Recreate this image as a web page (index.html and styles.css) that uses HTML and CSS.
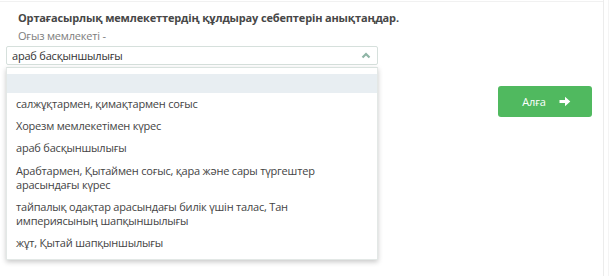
FILE: index.html
```html
<!DOCTYPE html>
<html lang="kk">
<head>
<meta charset="utf-8">
<link rel="stylesheet" href="styles.css">
</head>
<body>
<div class="page">
  <div class="main">
    <div class="question">
      <div class="title">Ортағасырлық мемлекеттердің құлдырау себептерін анықтаңдар.</div>
      <div class="label">Оғыз мемлекеті -</div>
    </div>
    <div class="select-wrap">
      <div class="select">
        <span class="value">араб басқыншылығы</span>
        <svg class="chev" width="10" height="7" viewBox="0 0 10 7"><polyline points="1.5,5.5 5,2 8.5,5.5" fill="none" stroke="#8fb5a6" stroke-width="2.2"/></svg>
      </div>
      <ul class="dropdown">
        <li class="opt empty"></li>
        <li class="opt">салжұқтармен, қимақтармен соғыс</li>
        <li class="opt">Хорезм мемлекетімен күрес</li>
        <li class="opt">араб басқыншылығы</li>
        <li class="opt">Арабтармен, Қытаймен соғыс, қара және сары түргештер арасындағы күрес</li>
        <li class="opt">тайпалық одақтар арасындағы билік үшін талас, Тан империясының шапқыншылығы</li>
        <li class="opt">жұт, Қытай шапқыншылығы</li>
      </ul>
    </div>
    <div class="actions">
      <button class="next">Алға
        <svg width="12" height="11" viewBox="0 0 12 11"><path d="M0.5 4 H6 V0.8 L11.3 5.5 L6 10.2 V7 H0.5 Z" fill="#fff"/></svg>
      </button>
    </div>
  </div>
  <div class="rail"></div>
</div>
</body>
</html>
```
FILE: styles.css
```css
* { box-sizing: border-box; }
html, body { margin: 0; padding: 0; background: #fff; }
body {
  font-family: "Open Sans", "Noto Sans", sans-serif;
  font-size: 11px;
  letter-spacing: -0.2px;
  color: #444;
  width: 609px;
  height: 276px;
  overflow: hidden;
}
.page { display: flex; height: 276px; }
.main {
  width: 603px;
  border-top: 1px solid #f1f1f1;
  margin-top: 1px;
  padding: 0 11px 0 0;
}
.rail {
  width: 6px;
  border-left: 1px solid #ececec;
  border-right: 1px solid #f4f4f4;
}
.question { padding: 7px 0 0 18px; }
.title {
  font-weight: 700;
  color: #474747;
  line-height: 17px;
  letter-spacing: -0.15px;
}
.label {
  color: #7d7d7d;
  line-height: 18px;
  margin-top: 1px;
}
.select-wrap {
  position: relative;
  margin-left: 6px;
  margin-top: 1px;
  width: 372px;
}
.select {
  height: 19px;
  border: 1px solid #d6e0dc;
  border-radius: 2px;
  display: flex;
  align-items: center;
  justify-content: space-between;
  padding: 0 6px 0 5px;
  color: #333;
  line-height: 16px;
}
.chev { display: block; margin-top: -1px; }
.dropdown {
  position: absolute;
  top: 21px;
  left: 0;
  width: 372px;
  margin: 0;
  padding: 6px 0 4px;
  list-style: none;
  background: #fff;
  border: 1px solid #e3e8e6;
  border-top: 1px solid #d9e2de;
  box-shadow: 0 2px 5px rgba(0, 0, 0, 0.22);
  z-index: 2;
}
.opt {
  padding: 4px 20px 4px 9px;
  line-height: 14.2px;
  color: #444;
}
.opt.empty {
  height: 19px;
  padding: 0;
  background: #e8eef2;
}
.actions {
  display: flex;
  justify-content: flex-end;
  margin-top: 21px;
}
.next {
  width: 94px;
  height: 31px;
  border: none;
  border-radius: 3px;
  background: #50b95f;
  color: #fff;
  font-family: "Open Sans", "Noto Sans", sans-serif;
  font-size: 11px;
  letter-spacing: -0.2px;
  display: flex;
  align-items: center;
  justify-content: center;
  gap: 13px;
  padding: 0 0 0 3px;
}
.next svg { display: block; }
```
